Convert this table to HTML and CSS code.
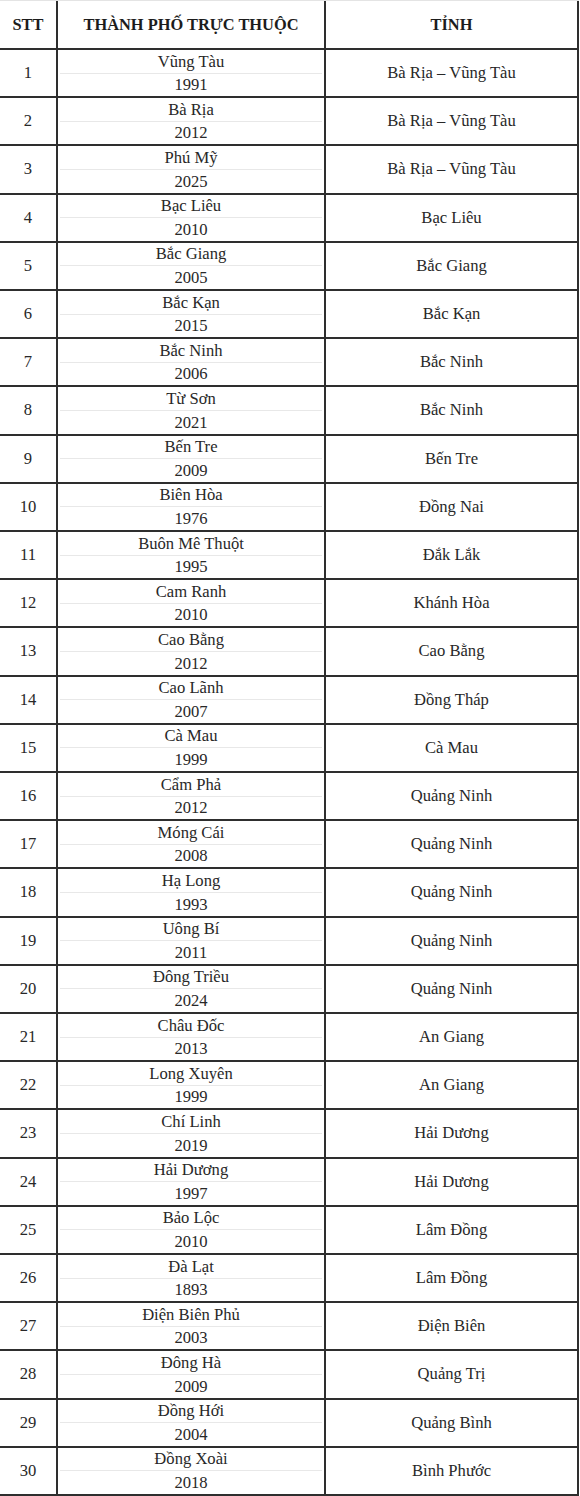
FILE: index.html
```html
<!DOCTYPE html>
<html lang="vi">
<head>
<meta charset="utf-8">
<title>Thành phố trực thuộc tỉnh</title>
<link rel="stylesheet" href="styles.css">
</head>
<body>
<div class="sheet">
  <div class="cell head">STT</div>
  <div class="cell head">THÀNH PHỐ TRỰC THUỘC</div>
  <div class="cell head">TỈNH</div>

  <div class="cell num">1</div><div class="cell city"><span class="name">Vũng Tàu</span><span class="year">1991</span></div><div class="cell prov">Bà Rịa – Vũng Tàu</div>
  <div class="cell num">2</div><div class="cell city"><span class="name">Bà Rịa</span><span class="year">2012</span></div><div class="cell prov">Bà Rịa – Vũng Tàu</div>
  <div class="cell num">3</div><div class="cell city"><span class="name">Phú Mỹ</span><span class="year">2025</span></div><div class="cell prov">Bà Rịa – Vũng Tàu</div>
  <div class="cell num">4</div><div class="cell city"><span class="name">Bạc Liêu</span><span class="year">2010</span></div><div class="cell prov">Bạc Liêu</div>
  <div class="cell num">5</div><div class="cell city"><span class="name">Bắc Giang</span><span class="year">2005</span></div><div class="cell prov">Bắc Giang</div>
  <div class="cell num">6</div><div class="cell city"><span class="name">Bắc Kạn</span><span class="year">2015</span></div><div class="cell prov">Bắc Kạn</div>
  <div class="cell num">7</div><div class="cell city"><span class="name">Bắc Ninh</span><span class="year">2006</span></div><div class="cell prov">Bắc Ninh</div>
  <div class="cell num">8</div><div class="cell city"><span class="name">Từ Sơn</span><span class="year">2021</span></div><div class="cell prov">Bắc Ninh</div>
  <div class="cell num">9</div><div class="cell city"><span class="name">Bến Tre</span><span class="year">2009</span></div><div class="cell prov">Bến Tre</div>
  <div class="cell num">10</div><div class="cell city"><span class="name">Biên Hòa</span><span class="year">1976</span></div><div class="cell prov">Đồng Nai</div>
  <div class="cell num">11</div><div class="cell city"><span class="name">Buôn Mê Thuột</span><span class="year">1995</span></div><div class="cell prov">Đắk Lắk</div>
  <div class="cell num">12</div><div class="cell city"><span class="name">Cam Ranh</span><span class="year">2010</span></div><div class="cell prov">Khánh Hòa</div>
  <div class="cell num">13</div><div class="cell city"><span class="name">Cao Bằng</span><span class="year">2012</span></div><div class="cell prov">Cao Bằng</div>
  <div class="cell num">14</div><div class="cell city"><span class="name">Cao Lãnh</span><span class="year">2007</span></div><div class="cell prov">Đồng Tháp</div>
  <div class="cell num">15</div><div class="cell city"><span class="name">Cà Mau</span><span class="year">1999</span></div><div class="cell prov">Cà Mau</div>
  <div class="cell num">16</div><div class="cell city"><span class="name">Cẩm Phả</span><span class="year">2012</span></div><div class="cell prov">Quảng Ninh</div>
  <div class="cell num">17</div><div class="cell city"><span class="name">Móng Cái</span><span class="year">2008</span></div><div class="cell prov">Quảng Ninh</div>
  <div class="cell num">18</div><div class="cell city"><span class="name">Hạ Long</span><span class="year">1993</span></div><div class="cell prov">Quảng Ninh</div>
  <div class="cell num">19</div><div class="cell city"><span class="name">Uông Bí</span><span class="year">2011</span></div><div class="cell prov">Quảng Ninh</div>
  <div class="cell num">20</div><div class="cell city"><span class="name">Đông Triều</span><span class="year">2024</span></div><div class="cell prov">Quảng Ninh</div>
  <div class="cell num">21</div><div class="cell city"><span class="name">Châu Đốc</span><span class="year">2013</span></div><div class="cell prov">An Giang</div>
  <div class="cell num">22</div><div class="cell city"><span class="name">Long Xuyên</span><span class="year">1999</span></div><div class="cell prov">An Giang</div>
  <div class="cell num">23</div><div class="cell city"><span class="name">Chí Linh</span><span class="year">2019</span></div><div class="cell prov">Hải Dương</div>
  <div class="cell num">24</div><div class="cell city"><span class="name">Hải Dương</span><span class="year">1997</span></div><div class="cell prov">Hải Dương</div>
  <div class="cell num">25</div><div class="cell city"><span class="name">Bảo Lộc</span><span class="year">2010</span></div><div class="cell prov">Lâm Đồng</div>
  <div class="cell num">26</div><div class="cell city"><span class="name">Đà Lạt</span><span class="year">1893</span></div><div class="cell prov">Lâm Đồng</div>
  <div class="cell num">27</div><div class="cell city"><span class="name">Điện Biên Phủ</span><span class="year">2003</span></div><div class="cell prov">Điện Biên</div>
  <div class="cell num">28</div><div class="cell city"><span class="name">Đông Hà</span><span class="year">2009</span></div><div class="cell prov">Quảng Trị</div>
  <div class="cell num">29</div><div class="cell city"><span class="name">Đồng Hới</span><span class="year">2004</span></div><div class="cell prov">Quảng Bình</div>
  <div class="cell num">30</div><div class="cell city"><span class="name">Đồng Xoài</span><span class="year">2018</span></div><div class="cell prov">Bình Phước</div>
</div>
</body>
</html>
```

FILE: styles.css
```css
html, body {
  margin: 0;
  padding: 0;
  background: #ffffff;
}

.sheet {
  display: grid;
  grid-template-columns: 58px 268px 253px;
  grid-template-rows: 49px repeat(30, 1fr);
  width: 579px;
  height: 1496px;
  box-sizing: border-box;
  border-top: 1px solid #e4e4e4;
  font-family: "Liberation Serif", "Times New Roman", serif;
  font-size: 16.6px;
  color: #282828;
}

.cell {
  box-sizing: border-box;
  border-bottom: 2px solid #2e2e2e;
  border-right: 2px solid #2e2e2e;
  display: flex;
  align-items: center;
  justify-content: center;
  text-align: center;
  min-width: 0;
  min-height: 0;
}

.head {
  font-weight: bold;
  font-size: 16.4px;
  color: #1c1c1c;
  padding-top: 1px;
}

.num,
.prov {
  padding-top: 0;
}

.city {
  flex-direction: column;
  align-items: stretch;
  padding: 0 2px;
}

.name,
.year {
  flex: 1;
  display: flex;
  align-items: flex-end;
  justify-content: center;
  padding-bottom: 2px;
  line-height: 18px;
}

.name {
  border-bottom: 1px solid #e8e8e8;
}
```
